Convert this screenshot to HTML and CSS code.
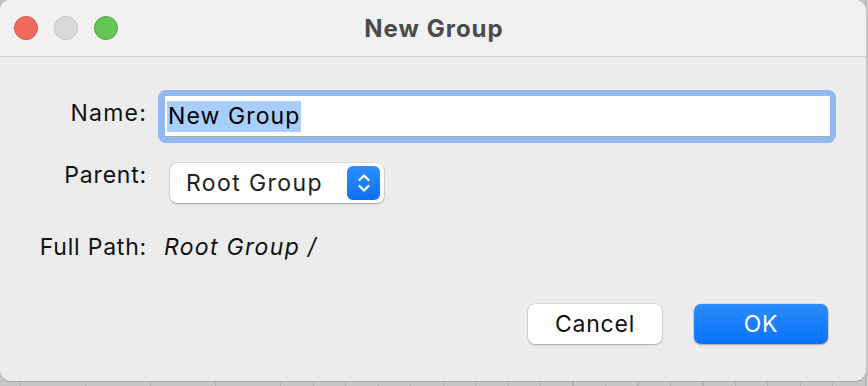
FILE: index.html
```html
<!DOCTYPE html>
<html lang="en">
<head>
    <meta charset="UTF-8">
    <title>New Group</title>
    <link rel="stylesheet" href="styles.css">
</head>
<body>
    <div class="window">
        <div class="titlebar">
            <div class="lights">
                <span class="light red"></span>
                <span class="light gray"></span>
                <span class="light green"></span>
            </div>
            <div class="title">New Group</div>
        </div>

        <div class="content">
            <div class="form">
                <label class="label label-name">Name:</label>
                <div class="field-ring">
                    <div class="field"><span class="selected">New Group</span></div>
                </div>

                <label class="label label-parent">Parent:</label>
                <div class="popup">
                    <span class="popup-text">Root Group</span>
                    <span class="stepper">
                        <svg width="16" height="26" viewBox="0 0 16 26">
                            <path d="M3.5 10 L8 5.5 L12.5 10" fill="none" stroke="#fff" stroke-width="2.2" stroke-linecap="round" stroke-linejoin="round"/>
                            <path d="M3.5 16 L8 20.5 L12.5 16" fill="none" stroke="#fff" stroke-width="2.2" stroke-linecap="round" stroke-linejoin="round"/>
                        </svg>
                    </span>
                </div>

                <label class="label label-path">Full Path:</label>
                <div class="path">Root Group /</div>
            </div>

            <div class="actions">
                <button class="btn">Cancel</button>
                <button class="btn btn-primary">OK</button>
            </div>
        </div>
    </div>
</body>
</html>
```

FILE: styles.css
```css
html, body {
    margin: 0;
    padding: 0;
}
body {
    width: 868px;
    height: 386px;
    overflow: hidden;
    font-family: Inter, "Liberation Sans", sans-serif;
    color: #111;
    background-color: #c6c6c6;
    background-image: repeating-linear-gradient(90deg, #c6c6c6 0, #c6c6c6 20px, #b2b2b2 20px, #b2b2b2 21px, #c6c6c6 21px, #c6c6c6 32.5px);
}
.window {
    width: 866px;
    height: 381px;
    background: #ececec;
    border-radius: 11px;
    overflow: hidden;
    display: flex;
    flex-direction: column;
    box-shadow: 0 1px 0 #a9a9a9;
}
.titlebar {
    position: relative;
    height: 56px;
    flex: none;
    background: #f1f1f1;
    border-bottom: 1px solid #cfcfcf;
    display: flex;
    align-items: center;
    justify-content: center;
}
.lights {
    position: absolute;
    left: 14px;
    top: 16px;
    display: flex;
    gap: 16px;
}
.light {
    width: 24px;
    height: 24px;
    border-radius: 50%;
    box-sizing: border-box;
}
.red {
    background: #ee6a5f;
    border: 1px solid #d9534a;
}
.gray {
    background: #dadada;
    border: 1px solid #c4c4c4;
}
.green {
    background: #62c554;
    border: 1px solid #4eab40;
}
.title {
    font-size: 24px;
    font-weight: 700;
    color: #4b4b4b;
    letter-spacing: 1px;
    margin-left: 2px;
}
.content {
    flex: 1;
    display: flex;
    flex-direction: column;
}
.form {
    margin-top: 33px;
    display: grid;
    grid-template-columns: 147px 1fr;
    grid-template-rows: 53px 40px 40px;
    row-gap: 20px;
    align-items: center;
}
.label {
    font-size: 23px;
    letter-spacing: 0.8px;
    text-align: right;
    color: #111;
}
.label-name {
    margin-bottom: 7px;
    letter-spacing: 1.2px;
}
.label-parent {
    margin-bottom: 16px;
}
.label-path {
    margin-top: 8px;
}
.field-ring {
    margin-left: 11px;
    width: 665px;
    height: 41px;
    padding: 6px 6px 6px 7px;
    background: #93b8ef;
    border-radius: 8px;
}
.field {
    height: 40px;
    background: #fff;
    border-bottom: 1px solid #a9a9a9;
    display: flex;
    align-items: center;
    padding-left: 2px;
    font-size: 23px;
    letter-spacing: 1.1px;
}
.selected {
    background: #a7cefc;
    color: #000;
    line-height: 31px;
    padding: 0 1px;
}
.popup {
    margin-left: 23px;
    width: 214px;
    height: 40px;
    box-sizing: border-box;
    background: #fff;
    border-radius: 7px;
    box-shadow: 0 0 0 0.5px rgba(0, 0, 0, 0.12), 0 1px 2px rgba(0, 0, 0, 0.25);
    display: flex;
    align-items: center;
    justify-content: space-between;
    padding: 0 4px 0 16px;
}
.popup-text {
    font-size: 23px;
    letter-spacing: 1.4px;
    color: #222;
}
.stepper {
    width: 33px;
    height: 34px;
    border-radius: 6px;
    background: linear-gradient(#2f8ffc, #0b70f6);
    display: flex;
    align-items: center;
    justify-content: center;
}
.path {
    margin-left: 17px;
    margin-top: 8px;
    font-size: 23px;
    letter-spacing: 1.3px;
    font-style: italic;
    color: #111;
}
.actions {
    margin-top: 41px;
    display: flex;
    justify-content: flex-end;
    gap: 32px;
    padding-right: 38px;
}
.btn {
    width: 134px;
    height: 40px;
    border: none;
    border-radius: 7px;
    background: #fff;
    box-shadow: 0 0 0 0.5px rgba(0, 0, 0, 0.12), 0 1px 2px rgba(0, 0, 0, 0.25);
    font-family: Inter, "Liberation Sans", sans-serif;
    font-size: 23px;
    letter-spacing: 0.8px;
    color: #111;
    padding: 0;
}
.btn-primary {
    background: linear-gradient(#2a8cfd, #0a73fb);
    color: #fff;
}
```
